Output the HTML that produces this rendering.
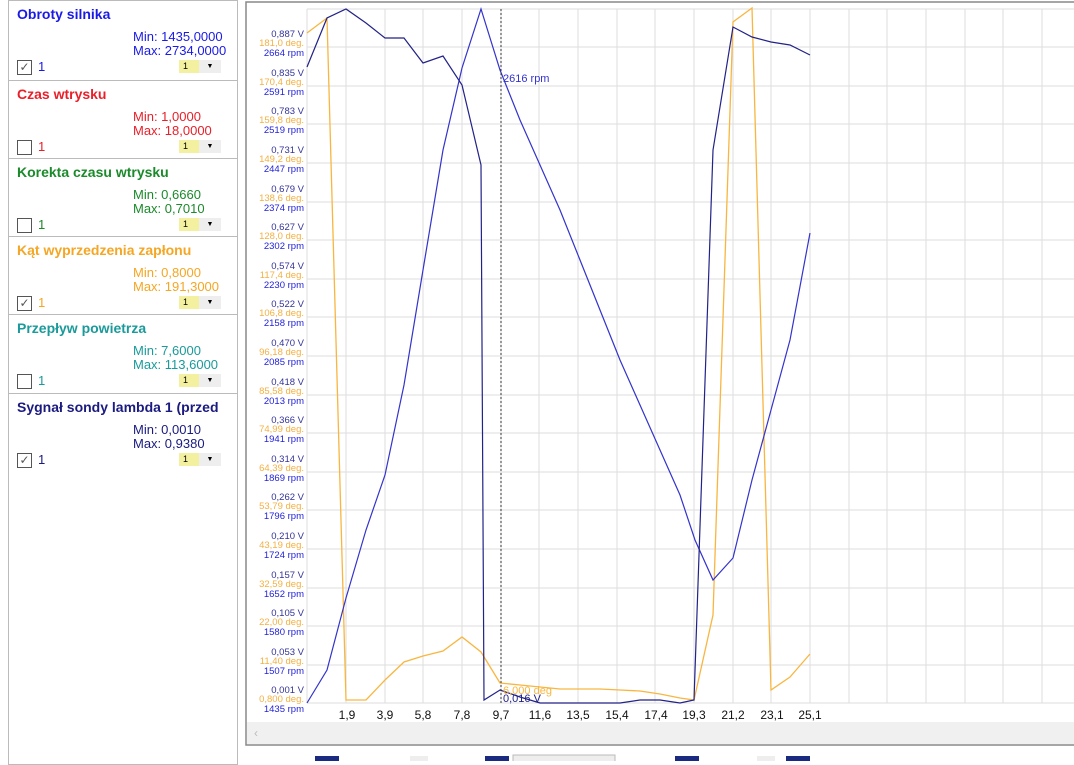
<!DOCTYPE html>
<html><head><meta charset="utf-8"><style>
body{margin:0;width:1074px;height:761px;background:#fff;font-family:"Liberation Sans",sans-serif;position:relative;overflow:hidden}
.box{position:absolute;left:8px;width:230px;border:1px solid #bbb;background:#fff;box-sizing:border-box}
.t{position:absolute;left:8px;top:5px;font-weight:bold;font-size:14px;white-space:nowrap;overflow:hidden;width:220px}
.mm{position:absolute;right:9px;top:29px;font-size:13px;line-height:14px;width:95px}
.cb{position:absolute;left:8px;top:59px;width:13px;height:13px;border:1px solid #555;background:#fff;font-size:12px;line-height:13px;text-align:center;color:#555}
.n{position:absolute;left:29px;top:58px;font-size:13px}
.sel{position:absolute;left:170px;top:59px;width:20px;height:13px;background:#f3f0a0;font-size:9px;line-height:13px;padding-left:4px;box-sizing:border-box;color:#000}
.ar{position:absolute;left:190px;top:59px;width:22px;height:13px;background:#eee;font-size:7px;line-height:13px;text-align:center;color:#000}
</style></head><body>
<div class="box" style="top:0;height:81px;color:#1a1ae6"><div class="t">Obroty silnika</div><div class="mm">Min: 1435,0000<br>Max: 2734,0000</div><div class="cb">✓</div><div class="n">1</div><div class="sel">1</div><div class="ar">▼</div></div>
<div class="box" style="top:80px;height:79px;color:#e8202a"><div class="t">Czas wtrysku</div><div class="mm">Min: 1,0000<br>Max: 18,0000</div><div class="cb"></div><div class="n">1</div><div class="sel">1</div><div class="ar">▼</div></div>
<div class="box" style="top:158px;height:79px;color:#1a8a2a"><div class="t">Korekta czasu wtrysku</div><div class="mm">Min: 0,6660<br>Max: 0,7010</div><div class="cb"></div><div class="n">1</div><div class="sel">1</div><div class="ar">▼</div></div>
<div class="box" style="top:236px;height:79px;color:#f5a623"><div class="t">Kąt wyprzedzenia zapłonu</div><div class="mm">Min: 0,8000<br>Max: 191,3000</div><div class="cb">✓</div><div class="n">1</div><div class="sel">1</div><div class="ar">▼</div></div>
<div class="box" style="top:314px;height:80px;color:#1a9a9a"><div class="t">Przepływ powietrza</div><div class="mm">Min: 7,6000<br>Max: 113,6000</div><div class="cb"></div><div class="n">1</div><div class="sel">1</div><div class="ar">▼</div></div>
<div class="box" style="top:393px;height:372px;color:#1a1a80"><div class="t">Sygnał sondy lambda 1 (przed</div><div class="mm">Min: 0,0010<br>Max: 0,9380</div><div class="cb">✓</div><div class="n">1</div><div class="sel">1</div><div class="ar">▼</div></div>

<svg style="position:absolute;left:0;top:0" width="1074" height="761" font-family="Liberation Sans, sans-serif">
<rect x="246" y="2" width="830" height="743" fill="#fff" stroke="#888" stroke-width="1.5"/>
<g stroke="#ddd" stroke-width="1">
<line x1="307" y1="9" x2="1074" y2="9"/><line x1="307" y1="47" x2="1074" y2="47"/><line x1="307" y1="86" x2="1074" y2="86"/><line x1="307" y1="124" x2="1074" y2="124"/><line x1="307" y1="163" x2="1074" y2="163"/><line x1="307" y1="202" x2="1074" y2="202"/><line x1="307" y1="240" x2="1074" y2="240"/><line x1="307" y1="279" x2="1074" y2="279"/><line x1="307" y1="317" x2="1074" y2="317"/><line x1="307" y1="356" x2="1074" y2="356"/><line x1="307" y1="395" x2="1074" y2="395"/><line x1="307" y1="433" x2="1074" y2="433"/><line x1="307" y1="472" x2="1074" y2="472"/><line x1="307" y1="510" x2="1074" y2="510"/><line x1="307" y1="549" x2="1074" y2="549"/><line x1="307" y1="588" x2="1074" y2="588"/><line x1="307" y1="626" x2="1074" y2="626"/><line x1="307" y1="665" x2="1074" y2="665"/><line x1="307" y1="703" x2="1074" y2="703"/>
<line x1="307" y1="9" x2="307" y2="703"/><line x1="346" y1="9" x2="346" y2="703"/><line x1="385" y1="9" x2="385" y2="703"/><line x1="423" y1="9" x2="423" y2="703"/><line x1="462" y1="9" x2="462" y2="703"/><line x1="501" y1="9" x2="501" y2="703"/><line x1="539" y1="9" x2="539" y2="703"/><line x1="578" y1="9" x2="578" y2="703"/><line x1="617" y1="9" x2="617" y2="703"/><line x1="655" y1="9" x2="655" y2="703"/><line x1="694" y1="9" x2="694" y2="703"/><line x1="733" y1="9" x2="733" y2="703"/><line x1="771" y1="9" x2="771" y2="703"/><line x1="810" y1="9" x2="810" y2="703"/><line x1="849" y1="9" x2="849" y2="703"/><line x1="887" y1="9" x2="887" y2="703"/><line x1="926" y1="9" x2="926" y2="703"/><line x1="965" y1="9" x2="965" y2="703"/><line x1="1003" y1="9" x2="1003" y2="703"/><line x1="1042" y1="9" x2="1042" y2="703"/>
</g>
<g font-size="9.5" text-anchor="end">
<g fill="#333399"><text x="304" y="37">0,887 V</text><text x="304" y="76">0,835 V</text><text x="304" y="114">0,783 V</text><text x="304" y="153">0,731 V</text><text x="304" y="192">0,679 V</text><text x="304" y="230">0,627 V</text><text x="304" y="269">0,574 V</text><text x="304" y="307">0,522 V</text><text x="304" y="346">0,470 V</text><text x="304" y="385">0,418 V</text><text x="304" y="423">0,366 V</text><text x="304" y="462">0,314 V</text><text x="304" y="500">0,262 V</text><text x="304" y="539">0,210 V</text><text x="304" y="578">0,157 V</text><text x="304" y="616">0,105 V</text><text x="304" y="655">0,053 V</text><text x="304" y="693">0,001 V</text></g>
<g fill="#f5b040"><text x="304" y="46">181,0 deg.</text><text x="304" y="85">170,4 deg.</text><text x="304" y="123">159,8 deg.</text><text x="304" y="162">149,2 deg.</text><text x="304" y="201">138,6 deg.</text><text x="304" y="239">128,0 deg.</text><text x="304" y="278">117,4 deg.</text><text x="304" y="316">106,8 deg.</text><text x="304" y="355">96,18 deg.</text><text x="304" y="394">85,58 deg.</text><text x="304" y="432">74,99 deg.</text><text x="304" y="471">64,39 deg.</text><text x="304" y="509">53,79 deg.</text><text x="304" y="548">43,19 deg.</text><text x="304" y="587">32,59 deg.</text><text x="304" y="625">22,00 deg.</text><text x="304" y="664">11,40 deg.</text><text x="304" y="702">0,800 deg.</text></g>
<g fill="#2222dd"><text x="304" y="56">2664 rpm</text><text x="304" y="95">2591 rpm</text><text x="304" y="133">2519 rpm</text><text x="304" y="172">2447 rpm</text><text x="304" y="211">2374 rpm</text><text x="304" y="249">2302 rpm</text><text x="304" y="288">2230 rpm</text><text x="304" y="326">2158 rpm</text><text x="304" y="365">2085 rpm</text><text x="304" y="404">2013 rpm</text><text x="304" y="442">1941 rpm</text><text x="304" y="481">1869 rpm</text><text x="304" y="519">1796 rpm</text><text x="304" y="558">1724 rpm</text><text x="304" y="597">1652 rpm</text><text x="304" y="635">1580 rpm</text><text x="304" y="674">1507 rpm</text><text x="304" y="712">1435 rpm</text></g>
</g>
<g font-size="12" text-anchor="middle" fill="#111"><text x="347" y="719">1,9</text><text x="385" y="719">3,9</text><text x="423" y="719">5,8</text><text x="462" y="719">7,8</text><text x="501" y="719">9,7</text><text x="540" y="719">11,6</text><text x="578" y="719">13,5</text><text x="617" y="719">15,4</text><text x="656" y="719">17,4</text><text x="694" y="719">19,3</text><text x="733" y="719">21,2</text><text x="772" y="719">23,1</text><text x="810" y="719">25,1</text></g>
<polyline fill="none" stroke="#f8b640" stroke-width="1.3" points="307,33 327,18 346,700 366,700 385,680 404,662 423,656 443,651 462,637 481,652 500,683 520,685 540,687 560,689 580,689 600,689 620,690 640,691 660,694 680,698 694,700 713,615 733,22 752,8 771,690 790,677 810,654"/>
<polyline fill="none" stroke="#3333cc" stroke-width="1.2" points="307,703 327,670 346,598 366,530 385,475 404,385 423,270 443,150 462,68 481,9 500,70 520,120 540,165 560,210 580,260 600,310 620,360 640,405 660,450 680,495 695,540 713,580 733,558 752,480 771,410 790,340 810,233"/>
<polyline fill="none" stroke="#222288" stroke-width="1.2" points="307,67 327,18 346,9 366,23 385,38 404,38 423,63 443,56 462,85 481,165 484,700 500,690 520,697 540,703 620,703 640,700 660,700 680,703 694,700 713,150 733,27 752,37 771,42 790,45 810,55"/>
<line x1="501" y1="9" x2="501" y2="703" stroke="#333" stroke-dasharray="2,2"/>
<text x="503" y="82" font-size="11" fill="#3333cc">2616 rpm</text>
<text x="503" y="694" font-size="11" fill="#f8b640">6,000 deg</text>
<text x="503" y="702" font-size="11" fill="#222288">0,016 V</text>
<rect x="247" y="722" width="827" height="22" fill="#f0f0f0"/>
<text x="254" y="737" font-size="12" fill="#bbb">‹</text>
<rect x="315" y="756" width="24" height="8" fill="#1a2a80"/>
<rect x="410" y="756" width="18" height="8" fill="#eee"/>
<rect x="485" y="756" width="24" height="8" fill="#1a2a80"/>
<rect x="513" y="755" width="102" height="9" fill="#eee" stroke="#bbb"/>
<rect x="675" y="756" width="24" height="8" fill="#1a2a80"/>
<rect x="757" y="756" width="18" height="8" fill="#eee"/>
<rect x="786" y="756" width="24" height="8" fill="#1a2a80"/>
</svg>
</body></html>
